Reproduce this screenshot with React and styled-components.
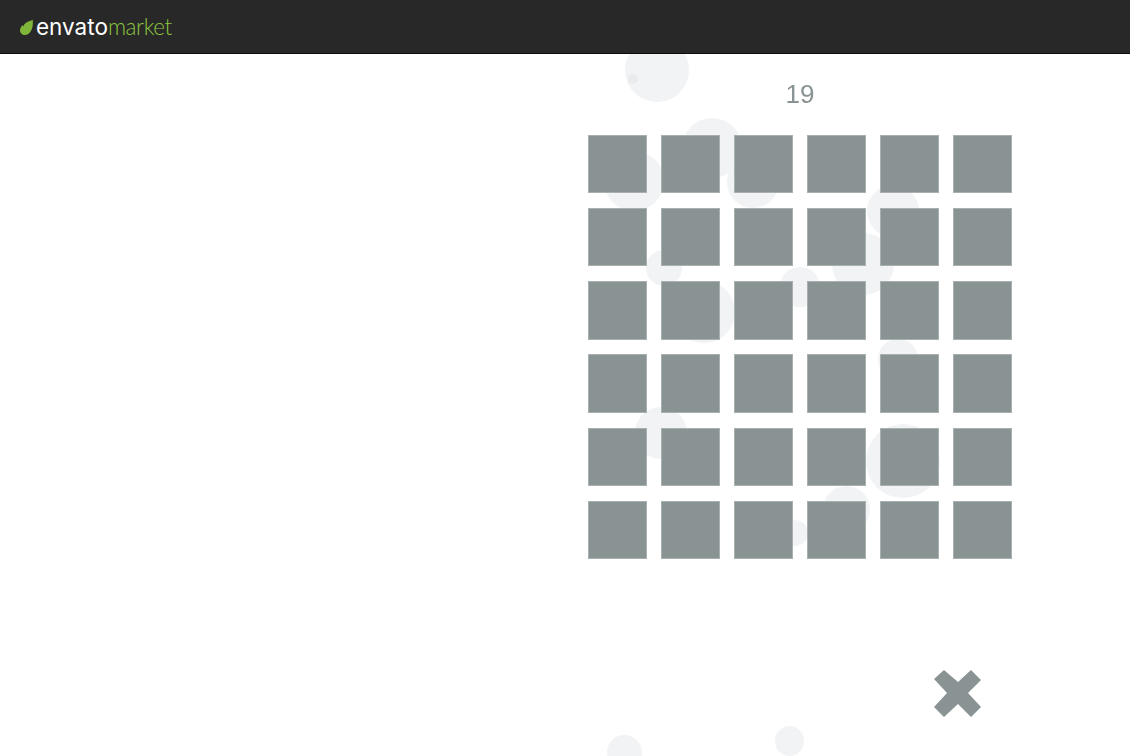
import styled, { createGlobalStyle } from "styled-components"

const GlobalStyle = createGlobalStyle`
    html, body {
        margin: 0;
        padding: 0;
        background: #ffffff;
    }
`;

const Page = styled.div`
    width: 1130px;
    height: 756px;
    position: relative;
    overflow: hidden;
    background: #ffffff;
    display: flex;
    flex-direction: column;
`;

const Header = styled.header`
    height: 51px;
    flex: none;
    background: #282828;
    border-bottom: 1px solid #0c0c0c;
    display: flex;
    align-items: center;
    padding: 2px 0 0 20px;
    position: relative;
    z-index: 2;
`;

const Logo = styled.div`
    display: flex;
    align-items: center;
    line-height: 1;
`;

const Envato = styled.span`
    font-family: "Inter", sans-serif;
    font-size: 22.5px;
    font-weight: 400;
    color: #ffffff;
    margin-left: 2px;
`;

const Market = styled.span`
    font-family: "Lato", sans-serif;
    font-size: 22.5px;
    font-weight: 300;
    letter-spacing: -0.4px;
    color: #8cc63f;
`;

const Bubble = styled.div`
    position: absolute;
    border-radius: 50%;
    background: ${(p) => p.$dark ? "#e9ebed" : "#f2f3f5"};
    left: ${(p) => p.$x - p.$r}px;
    top: ${(p) => p.$y - p.$r}px;
    width: ${(p) => p.$r * 2}px;
    height: ${(p) => p.$r * 2}px;
`;

const Game = styled.main`
    position: relative;
    z-index: 1;
    flex: 1;
    display: flex;
    flex-direction: column;
    align-items: center;
    width: 424.5px;
    margin-left: 587.7px;
`;

const Score = styled.div`
    font-family: "Liberation Sans", Arial, sans-serif;
    font-size: 26px;
    line-height: 30px;
    color: #8a9393;
    margin-top: 25px;
    filter: blur(0.4px);
`;

const Board = styled.div`
    display: grid;
    grid-template-columns: repeat(6, 59px);
    grid-auto-rows: 58.4px;
    gap: 14.8px 14.1px;
    margin-top: 25.8px;
`;

const Tile = styled.div`
    box-sizing: border-box;
    background: #8a9393;
    border: 1px solid #a9b0b0;
`;

const CloseButton = styled.button`
    border: none;
    background: none;
    padding: 0;
    align-self: flex-end;
    margin: 110px 29px 0 0;
    width: 50px;
    height: 50px;
    display: block;
    filter: blur(0.4px);
`;

const bubbles = [
    [657, 70, 32],
    [712, 148, 30],
    [634, 181, 30],
    [753, 182, 26],
    [664, 268, 18],
    [800, 287, 20],
    [704, 312, 31],
    [893, 211, 26],
    [863, 264, 31],
    [898, 359, 20],
    [661, 433, 26],
    [903, 461, 37],
    [846.5, 509, 23.5],
    [795, 533, 13],
    [624.5, 752, 17.5],
    [789.5, 741, 14.7],
]

const App = () => {
    return (
        <Page>
            <GlobalStyle />
            <Header>
                <Logo>
                    <svg width="14" height="15" viewBox="0 0 14 15">
                        <path d="M12.8 0C9.5 0.8 5.8 2 4 4.8C3.6 5.4 3.4 6 3.4 6.6C2.9 6.2 2.7 5.6 2.7 5C1 6.5 0 8.4 0 10.4C0 13 2.2 15 5 15C9.6 15 13.6 9.6 12.8 0Z" fill="#7fb539" />
                    </svg>
                    <Envato>envato</Envato>
                    <Market>market</Market>
                </Logo>
            </Header>
            {bubbles.map(([x, y, r]) => (
                <Bubble key={`${x}-${y}`} $x={x} $y={y} $r={r} />
            ))}
            <Bubble $x={633} $y={79} $r={5} $dark />
            <Game>
                <Score>19</Score>
                <Board>
                    {Array.from({ length: 36 }, (_, i) => <Tile key={i} />)}
                </Board>
                <CloseButton aria-label="Close">
                    <svg width="50" height="50" viewBox="0 0 50 50">
                        <path d="M11 1L25 13L38 1L48 11L35 24L48 38L38 48L25 35L11 48L1 38L14 24L1 10Z" fill="#8a9393" />
                    </svg>
                </CloseButton>
            </Game>
        </Page>
    )
}

export default App
